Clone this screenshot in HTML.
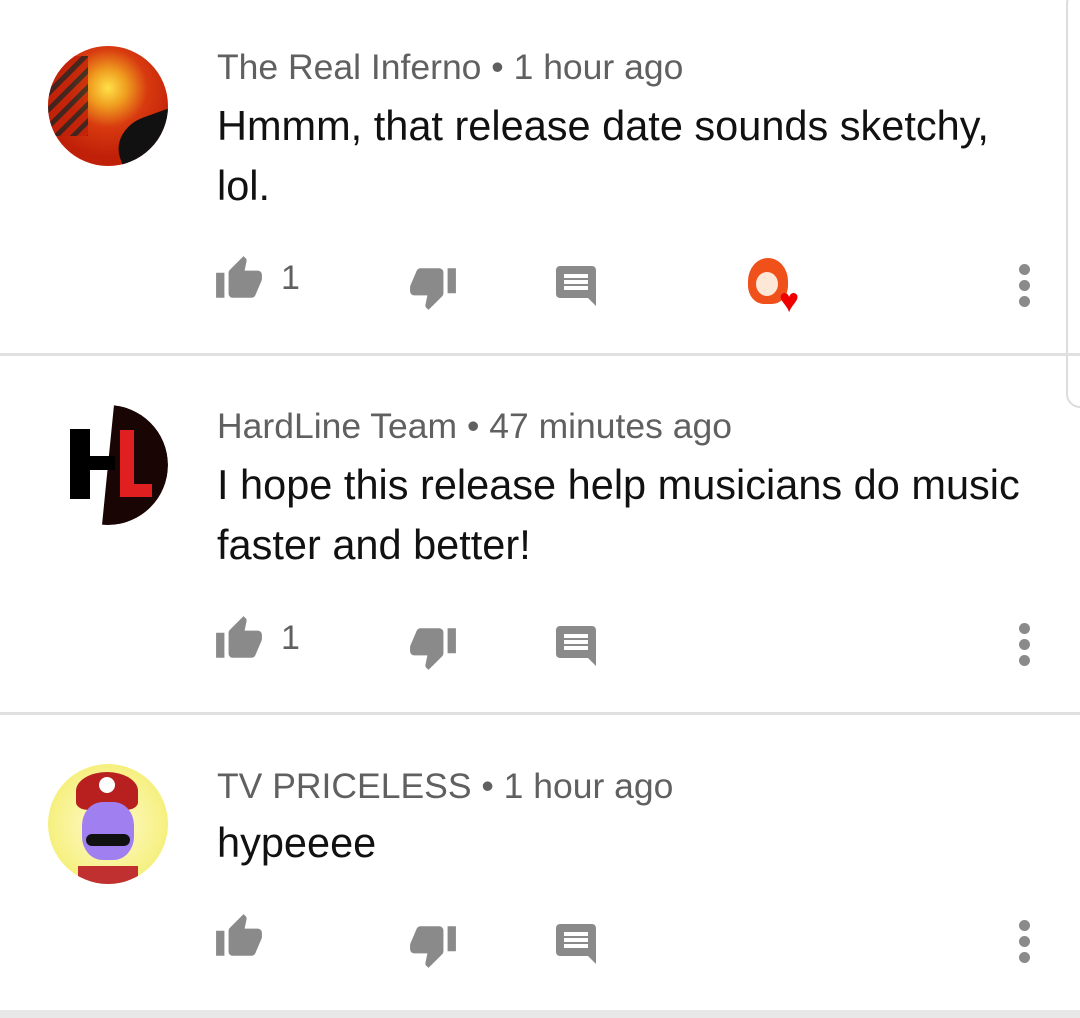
<!DOCTYPE html>
<html><head><meta charset="utf-8"><style>
*{margin:0;padding:0;box-sizing:border-box}
html,body{width:1080px;height:1018px;overflow:hidden;background:#fff;font-family:"Liberation Sans",sans-serif}
.abs{position:absolute}
.name{position:absolute;left:217px;font-size:35.5px;color:#606060;white-space:nowrap;line-height:40px}
.body{position:absolute;left:217px;font-size:41.5px;color:#111;white-space:nowrap;line-height:60px}
.cnt{position:absolute;font-size:34px;color:#606060;line-height:40px}
.div{position:absolute;left:0;width:1080px;height:3px;background:#e0e0e0}
.dots{position:absolute;left:1019px;width:12px}
.dots i{display:block;width:11px;height:11px;border-radius:50%;background:#8a8a8a;margin-bottom:5px}
.av{position:absolute;left:48px;width:120px;height:120px;border-radius:50%;overflow:hidden}
</style></head><body>
<svg width="0" height="0" style="position:absolute">
<defs>
<symbol id="up" viewBox="0 0 24 24"><path fill="#8a8a8a" d="M1 21h4V9H1v12zm22-11c0-1.1-.9-2-2-2h-6.31l.95-4.57.03-.32c0-.41-.17-.79-.44-1.06L14.17 1 7.59 7.59C7.22 7.95 7 8.45 7 9v10c0 1.1.9 2 2 2h9c.83 0 1.540-.5 1.84-1.22l3.02-7.05c.09-.23.14-.47.14-.73v-2z"/></symbol>
<symbol id="dn" viewBox="0 0 24 24"><path fill="#8a8a8a" d="M15 3H6c-.83 0-1.54.5-1.84 1.22l-3.02 7.05c-.09.23-.14.47-.14.73v2c0 1.1.9 2 2 2h6.31l-.95 4.57-.03.32c0 .41.17.79.44 1.06L9.83 23l6.59-6.59c.36-.36.58-.86.58-1.41V5c0-1.1-.9-2-2-2zm4 0v12h4V3h-4z"/></symbol>
<symbol id="cm" viewBox="0 0 24 24"><path fill="#8a8a8a" d="M21.99 4c0-1.1-.89-2-1.99-2H4c-1.1 0-2 .9-2 2v12c0 1.1.9 2 2 2h14l4 4-.01-18zM18 14H6v-2h12v2zm0-3H6V9h12v2zm0-3H6V6h12v2z"/></symbol>
</defs></svg>

<div class="abs" style="left:1066px;top:-10px;width:30px;height:418px;border:2px solid #ddd;border-radius:14px"></div>

<!-- Comment 1 -->
<div class="av" style="top:46px;background:radial-gradient(circle at 50% 35%,#ffe14a 0,#f0a020 18%,#d83a10 40%,#c02008 70%);">
<div class="abs" style="left:70px;top:70px;width:70px;height:60px;background:#111;border-radius:50% 0 0 0;transform:rotate(-20deg)"></div>
<div class="abs" style="left:0;top:10px;width:40px;height:80px;background:repeating-linear-gradient(135deg,#222 0 5px,#c02008 5px 12px);opacity:.8"></div>
</div>
<div class="name" style="top:47px">The Real Inferno • 1 hour ago</div>
<div class="body" style="top:96px">Hmmm, that release date sounds sketchy,</div>
<div class="body" style="top:156px">lol.</div>
<svg class="abs" style="left:214px;top:254px" width="50" height="50"><use href="#up"/></svg>
<div class="cnt" style="left:281px;top:258px">1</div>
<svg class="abs" style="left:408px;top:262px" width="50" height="50"><use href="#dn"/></svg>
<svg class="abs" style="left:552px;top:262px" width="48" height="48"><use href="#cm"/></svg>
<div class="abs" style="left:748px;top:258px;width:40px;height:46px;border-radius:50% 50% 40% 40%;background:#f0501a"></div>
<div class="abs" style="left:756px;top:272px;width:22px;height:24px;border-radius:50%;background:#fde8d8"></div>
<div class="abs" style="left:779px;top:284px;font-size:34px;color:#e00;line-height:34px">♥</div>
<div class="dots" style="top:264px"><i></i><i></i><i></i></div>
<div class="div" style="top:353px"></div>

<!-- Comment 2 -->
<div class="av" style="top:405px;background:transparent">
<div class="abs" style="left:0;top:0;width:120px;height:120px;border-radius:50%;background:#1a0505;clip-path:polygon(55% 0,100% 0,100% 100%,45% 100%)"></div>
</div>
<div class="abs" style="left:70px;top:429px;width:20px;height:70px;background:#000"></div>
<div class="abs" style="left:70px;top:456px;width:45px;height:14px;background:#000"></div>
<div class="abs" style="left:120px;top:430px;width:14px;height:65px;background:#e02020"></div>
<div class="abs" style="left:120px;top:484px;width:32px;height:13px;background:#e02020"></div>
<div class="name" style="top:406px">HardLine Team • 47 minutes ago</div>
<div class="body" style="top:455px">I hope this release help musicians do music</div>
<div class="body" style="top:515px">faster and better!</div>
<svg class="abs" style="left:214px;top:614px" width="50" height="50"><use href="#up"/></svg>
<div class="cnt" style="left:281px;top:618px">1</div>
<svg class="abs" style="left:408px;top:622px" width="50" height="50"><use href="#dn"/></svg>
<svg class="abs" style="left:552px;top:622px" width="48" height="48"><use href="#cm"/></svg>
<div class="dots" style="top:623px"><i></i><i></i><i></i></div>
<div class="div" style="top:712px"></div>

<!-- Comment 3 -->
<div class="av" style="top:764px;background:radial-gradient(circle at 50% 50%,#fffbd0 0,#f6f080 70%)">
<div class="abs" style="left:28px;top:8px;width:62px;height:38px;border-radius:50% 50% 20% 20%;background:#b82020"></div>
<div class="abs" style="left:51px;top:13px;width:16px;height:16px;border-radius:50%;background:#fff"></div>
<div class="abs" style="left:34px;top:38px;width:52px;height:58px;border-radius:40%;background:#a080f0"></div>
<div class="abs" style="left:38px;top:70px;width:44px;height:12px;border-radius:6px;background:#111"></div>
<div class="abs" style="left:30px;top:102px;width:60px;height:20px;background:#c03030"></div>
</div>
<div class="name" style="top:766px">TV PRICELESS • 1 hour ago</div>
<div class="body" style="top:813px">hypeeee</div>
<svg class="abs" style="left:214px;top:912px" width="50" height="50"><use href="#up"/></svg>
<svg class="abs" style="left:408px;top:920px" width="50" height="50"><use href="#dn"/></svg>
<svg class="abs" style="left:552px;top:920px" width="48" height="48"><use href="#cm"/></svg>
<div class="dots" style="top:920px"><i></i><i></i><i></i></div>
<div class="abs" style="left:0;top:1010px;width:1080px;height:8px;background:#e8e8e8"></div>
</body></html>
